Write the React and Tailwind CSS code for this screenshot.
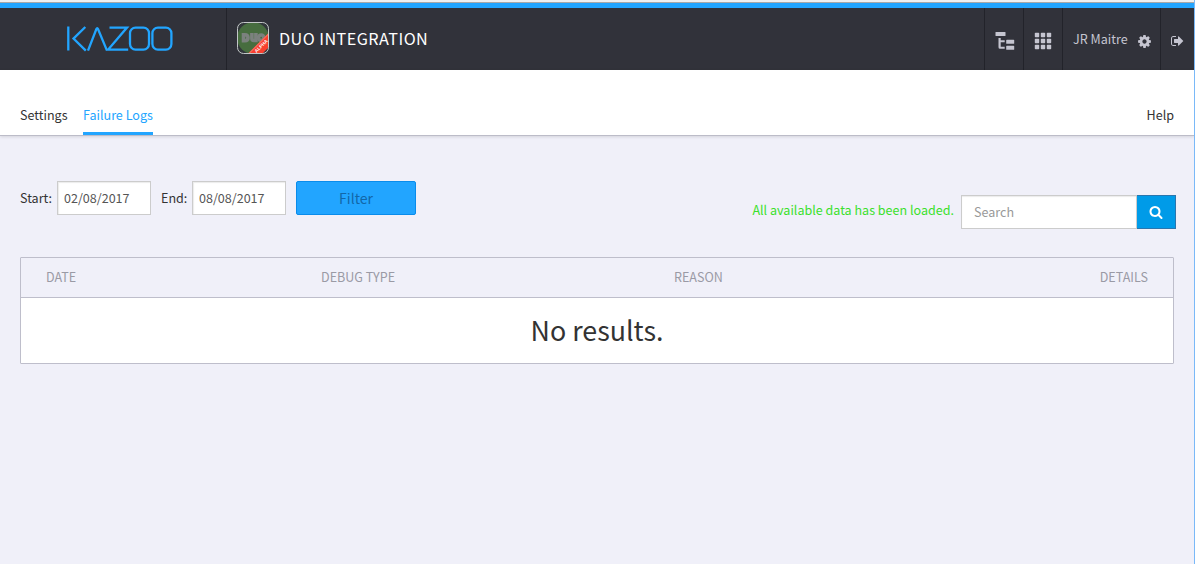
const COG =
  "M1152 896q0-106-75-181t-181-75-181 75-75 181 75 181 181 75 181-75 75-181zm512-109v222q0 12-8 23t-20 13l-185 28q-19 54-39 91 35 50 107 138 10 12 10 25t-9 23q-27 37-99 108t-94 71q-12 0-26-9l-138-108q-44 23-91 38-16 136-29 186-7 28-36 28h-222q-14 0-24.5-8.5t-11.5-21.5l-28-184q-49-16-90-37l-141 107q-10 9-25 9-14 0-25-11-126-114-165-168-7-10-7-23 0-12 8-23 15-21 51-66.5t54-70.5q-27-50-41-99l-183-27q-13-2-21-12.5t-8-23.5v-222q0-12 8-23t19-13l186-28q14-46 39-92-40-57-107-138-10-12-10-24 0-10 9-23 26-36 98.5-107.5t94.5-71.5q13 0 26 10l138 107q44-23 91-38 16-136 29-186 7-28 36-28h222q14 0 24.5 8.5t11.5 21.5l28 184q49 16 90 37l142-107q9-9 24-9 13 0 25 10 129 119 165 170 7 8 7 22 0 12-8 23-15 21-51 66.5t-54 70.5q26 50 41 98l183 28q13 2 21 12.5t8 23.5z";
const SIGN_OUT =
  "M640 1440q0 4 1 20t.5 26.5-3 23.5-10 19.5-20.5 6.5h-320q-119 0-203.5-84.5t-84.5-203.5v-704q0-119 84.5-203.5t203.5-84.5h320q13 0 22.5 9.5t9.5 22.5q0 4 1 20t.5 26.5-3 23.5-10 19.5-20.5 6.5h-320q-66 0-113 47t-47 113v704q0 66 47 113t113 47h312l11.5 1 11.5 3 8 5.5 7 9 2 13.5zm928-544q0 26-19 45l-544 544q-19 19-45 19t-45-19-19-45v-288h-448q-26 0-45-19t-19-45v-384q0-26 19-45t45-19h448v-288q0-26 19-45t45-19 45 19l544 544q19 19 19 45z";
const SEARCH =
  "M1216 832q0-185-131.5-316.5t-316.5-131.5-316.5 131.5-131.5 316.5 131.5 316.5 316.5 131.5 316.5-131.5 131.5-316.5zm512 832q0 52-38 90t-90 38q-54 0-90-38l-343-342q-179 124-399 124-143 0-273.5-55.5t-225-150-150-225-55.5-273.5 55.5-273.5 150-225 225-150 273.5-55.5 273.5 55.5 225 150 150 225 55.5 273.5q0 220-124 399l343 343q37 37 37 90z";

function Glyph({ d, className }) {
  return (
    <svg viewBox="0 0 1792 1792" fill="currentColor" className={className}>
      <path d={d} />
    </svg>
  );
}

function Logo() {
  return (
    <svg width="108" height="28" viewBox="0 0 108 28" fill="none" stroke="#22a5ff" strokeWidth="2.3" className="ml-[66px]">
      <path d="M2.3 1.6v24M19.3 2 7.5 13.6l12.3 12M22 25.6 30.4 4q.8-1.8 1.6 0L41 25.6M43.5 2.6h17.5L42.2 24.6h20" />
      <rect x="64" y="2.6" width="19" height="22" rx="5.5" />
      <rect x="86.4" y="2.6" width="19" height="22" rx="5.5" />
    </svg>
  );
}

function AppIcon() {
  return (
    <svg width="32" height="32" viewBox="0 0 32 32">
      <defs>
        <clipPath id="tile">
          <rect width="32" height="32" rx="6" />
        </clipPath>
      </defs>
      <g clipPath="url(#tile)">
        <rect width="32" height="32" fill="#32373b" />
        <circle cx="16" cy="16" r="15.8" fill="#476d3f" />
        <g fill="none" stroke="#7b817e" strokeWidth="3.6">
          <path d="M6.5 12.7h1.5q3 0 3 3t-3 3H6.5z" />
          <path d="M14.9 11v5.5q0 2 2 2h2V11" />
          <circle cx="24.2" cy="15.7" r="2.7" />
        </g>
        <path d="M10.5 32 32 10.5V25l-7 7z" fill="#f8402f" />
        <path d="M11.5 32 32 11.5" stroke="#f9b7a6" strokeWidth=".6" />
      </g>
      <rect x=".5" y=".5" width="31" height="31" rx="6" fill="none" stroke="#c3c6c8" />
      <text x="24.2" y="25.6" transform="rotate(-45 24.2 23.9)" textAnchor="middle" fontSize="4.8" fontWeight="700" fill="#fff" fontFamily="Liberation Sans, sans-serif">ALPHA</text>
    </svg>
  );
}

function TreeIcon() {
  return (
    <svg width="20" height="20" viewBox="0 0 20 20" fill="currentColor">
      <rect x="0.5" y="1" width="10" height="4" rx=".6" />
      <path d="M3.5 7h2.2v2.3h4v2H5.7v4.4h4v2H5q-1.5 0-1.5-1.5z" />
      <rect x="11.2" y="8.8" width="8" height="4" rx=".6" />
      <rect x="11.2" y="14.8" width="8" height="4" rx=".6" />
    </svg>
  );
}

function GridIcon() {
  return (
    <svg width="18" height="18" viewBox="0 0 18 18" fill="currentColor">
      {[0.8, 6.8, 12.8].map((y) =>
        [0.8, 6.8, 12.8].map((x) => <rect key={`${x}-${y}`} x={x} y={y} width="4.4" height="4.4" rx=".7" />)
      )}
    </svg>
  );
}

function DateField({ label, value, labelWidth }) {
  return (
    <label className="flex items-center">
      <span className={labelWidth}>{label}</span>
      <input
        defaultValue={value}
        className="h-[34px] w-[94px] border border-[#ccc] bg-white px-[6px] pb-0.5 text-[#555] shadow-[inset_1px_1px_1px_rgba(0,0,0,0.08)] outline-none"
      />
    </label>
  );
}

export default function App() {
  return (
    <div className="flex h-[564px] w-[1195px] flex-col overflow-hidden border-r border-[#7ab9f8] bg-[#f0f0f9] font-['Noto_Sans_CJK_SC',sans-serif] text-[12.55px] leading-5 text-[#333]">
      <div className="h-[3px] shrink-0 border-b border-[#a8a8a8] bg-[#f0f0f0]" />
      <header className="flex h-[67px] shrink-0 border-t-[5px] border-[#22a5ff] bg-[#31323a] text-[#c5c5d0]">
        <div className="flex w-[227px] items-center border-r border-[#22232a]">
          <Logo />
        </div>
        <div className="flex flex-1 items-center pb-[2px] pl-[10px]">
          <AppIcon />
          <h1 className="ml-[10px] text-[16.2px] tracking-[0.45px] text-white">DUO INTEGRATION</h1>
        </div>
        <div className="flex w-[39px] items-center justify-center border-l border-[#22232a] pt-1 pl-0.5">
          <TreeIcon />
        </div>
        <div className="flex w-[39px] items-center justify-center border-l border-[#22232a] pt-1">
          <GridIcon />
        </div>
        <div className="flex w-[98px] items-center border-l border-[#22232a] pl-[10px]">
          <span className="w-[55px] whitespace-nowrap">JR Maitre</span>
          <Glyph d={COG} className="mt-1 ml-[9px] size-[15px]" />
        </div>
        <div className="flex w-[34px] items-center border-l border-[#22232a] pt-1 pl-[10px]">
          <Glyph d={SIGN_OUT} className="size-[14px]" />
        </div>
      </header>

      <nav className="flex h-[66px] shrink-0 items-end border-b border-[#bcbcc8] bg-white px-5 shadow-[0_1px_3px_rgba(0,0,0,0.12)]">
        <a className="h-[30px] w-[63px]">Settings</a>
        <a className="h-[30px] border-b-[3px] border-[#22a5ff] text-[#22a5ff]">Failure Logs</a>
        <a className="ml-auto h-[30px]">Help</a>
      </nav>

      <main className="flex flex-col pl-5">
        <div className="flex justify-between pt-[45px] pr-[18px]">
          <div className="flex h-[34px] gap-[10px]">
            <DateField label="Start:" value="02/08/2017" labelWidth="w-[37px]" />
            <DateField label="End:" value="08/08/2017" labelWidth="w-[31px]" />
            <button className="w-[120px] rounded-[2px] border border-[#0a8ceb] bg-[#22a5ff] text-[14px] text-[#1267a8]">Filter</button>
          </div>
          <div className="mt-[14px] flex h-[34px]">
            <span className="mt-[5px] mr-[7px] text-[#3be02c]">All available data has been loaded.</span>
            <input
              placeholder="Search"
              className="w-[176px] border border-[#ccc] bg-white px-3 shadow-[inset_0_1px_1px_rgba(0,0,0,0.08)] outline-none placeholder:text-[#999]"
            />
            <button className="flex w-[39px] items-center justify-center border border-l-0 border-[#2a76ae] bg-[#009be8] text-white">
              <Glyph d={SEARCH} className="size-[14px]" />
            </button>
          </div>
        </div>

        <section className="mt-7 w-[1154px] rounded-[1px] border border-[#bebecb]">
          <div className="flex h-[40px] items-center border-b border-[#bebecb] px-[25px] pb-px text-[#9a9aa5]">
            <span className="w-[275px]">DATE</span>
            <span className="w-[353px]">DEBUG TYPE</span>
            <span>REASON</span>
            <span className="ml-auto">DETAILS</span>
          </div>
          <div className="flex h-[65px] items-center justify-center bg-white pb-0.5 text-[26.8px] leading-10">No results.</div>
        </section>
      </main>
    </div>
  );
}
